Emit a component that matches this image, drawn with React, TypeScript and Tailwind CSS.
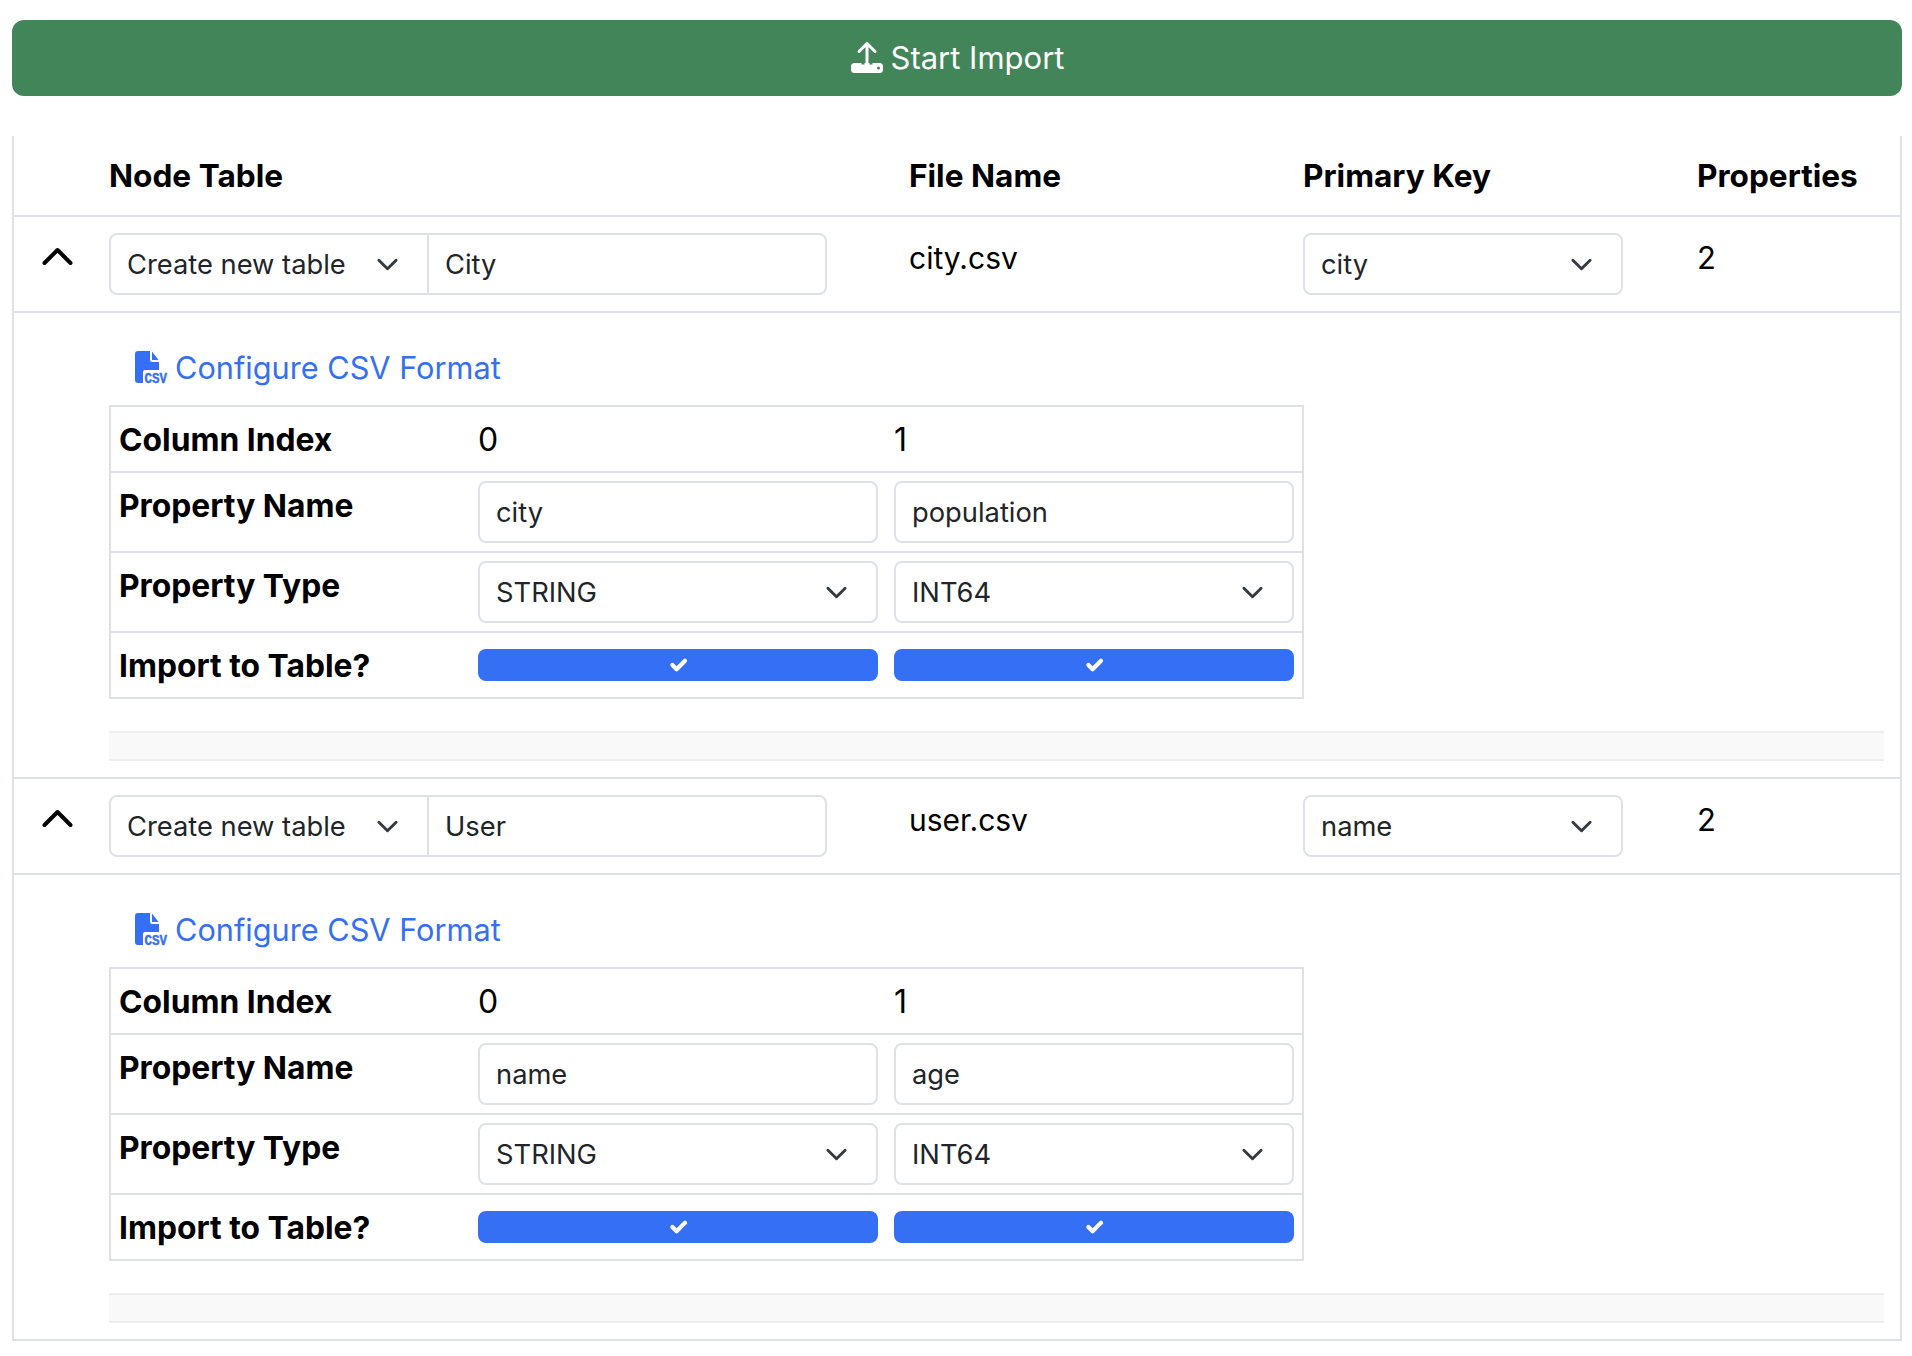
import React from 'react';

const Chevron = () => (
  <svg width="23" height="23" viewBox="0 0 16 16" fill="none" className="shrink-0">
    <path d="m2 5 6 6 6-6" stroke="#343a40" strokeWidth="2" strokeLinecap="round" strokeLinejoin="round" />
  </svg>
);

const UploadIcon = () => (
  <svg width="34" height="34" viewBox="0 0 34 34" fill="none" className="shrink-0">
    <rect x="1" y="22" width="32" height="10" rx="3.5" fill="#fff" />
    <path d="M14 22h6v3h-6z" fill="#fff" />
    <rect x="27" y="25.5" width="3" height="3" rx="1.5" fill="#418558" />
    <path d="M14.5 21.5h-3v2h3zM22.5 21.5h-3v2h3z" fill="#418558" />
    <path d="M17 24V3M9 10.5 17 2.5l8 8" stroke="#fff" strokeWidth="3" strokeLinecap="round" strokeLinejoin="round" />
  </svg>
);

const CsvIcon = () => (
  <svg width="37" height="38" viewBox="0 0 37 38" className="shrink-0">
    <path d="M3 0h12v8.5a2.5 2.5 0 0 0 2.5 2.5H24v8H10a2 2 0 0 0-2 2v11H3a3 3 0 0 1-3-3V3a3 3 0 0 1 3-3z" fill="#356ff3" />
    <path d="M17 0.5 23.5 9H17z" fill="#356ff3" />
    <text x="9.5" y="32" fontFamily="'Liberation Mono', monospace" fontWeight="700" fontSize="14" stroke="#356ff3" strokeWidth="0.4" fill="#356ff3" textLength="22.5" lengthAdjust="spacingAndGlyphs">CSV</text>
  </svg>
);

const SelectBox = ({ value, className }: { value: string; className?: string }) => (
  <div className={`h-[62px] flex items-center justify-between pl-[16px] pr-[28px] text-[27.3px] text-[#212529] border-2 border-[#dee2e6] bg-white ${className ?? 'rounded-lg'}`}>
    <span className="pt-[2px]">{value}</span>
    <Chevron />
  </div>
);

const InputBox = ({ value, className }: { value: string; className?: string }) => (
  <div className={`h-[62px] flex items-center pl-[16px] pt-[2px] text-[27.3px] text-[#212529] border-2 border-[#dee2e6] bg-white ${className ?? 'rounded-lg'}`}>
    {value}
  </div>
);

const ImportToggle = () => (
  <div className="h-8 rounded-lg bg-[#356ff3] flex items-center justify-center">
    <svg width="28" height="28" viewBox="0 0 20 20" fill="none">
      <path d="M6 10l3 3 6-6" stroke="#fff" strokeWidth="3" strokeLinecap="round" strokeLinejoin="round" />
    </svg>
  </div>
);

const rowGrid = 'grid grid-cols-[367px_416px_1fr] border-b-2 border-[#dee2e6]';
const labelCell = 'pl-2 text-[31.8px] leading-[42px] font-bold text-black';

type Table = {
  name: string;
  file: string;
  primaryKey: string;
  columns: { name: string; type: string }[];
};

const tables: Table[] = [
  { name: 'City', file: 'city.csv', primaryKey: 'city', columns: [{ name: 'city', type: 'STRING' }, { name: 'population', type: 'INT64' }] },
  { name: 'User', file: 'user.csv', primaryKey: 'name', columns: [{ name: 'name', type: 'STRING' }, { name: 'age', type: 'INT64' }] },
];

const outerGrid = 'grid grid-cols-[95px_800px_394px_394px_1fr]';

const TableSection = ({ table }: { table: Table }) => (
  <div>
    <div className={`${outerGrid} h-[96px] border-b-2 border-[#dee2e6] pt-4`}>
      <div className="flex pl-[28px] pt-[13px]">
        <svg width="32" height="20" viewBox="0 0 32 20" fill="none">
          <path d="M2.5 17 15.5 4l13 13" stroke="#000" strokeWidth="4" strokeLinecap="round" strokeLinejoin="round" />
        </svg>
      </div>
      <div className="flex w-[718px]">
        <SelectBox value="Create new table" className="w-[320px] rounded-l-lg" />
        <InputBox value={table.name} className="flex-1 -ml-[2px] rounded-r-lg" />
      </div>
      <div className="text-[30px] leading-[50px] text-black">{table.file}</div>
      <div className="w-[320px]">
        <SelectBox value={table.primaryKey} />
      </div>
      <div className="text-[31px] leading-[50px] text-black">2</div>
    </div>
    <div className="pl-[95px] pr-4 h-[466px] border-b-2 border-[#dee2e6]">
      <div className="h-[92px] pl-[26px] pt-[38px] flex items-start gap-[3px]">
        <CsvIcon />
        <span className="text-[30.7px] leading-[34px] text-[#356ff3]">Configure CSV Format</span>
      </div>
      <div className="w-[1195px] border-2 border-b-0 border-[#dee2e6]">
        <div className={`${rowGrid} h-[66px]`}>
          <div className={`${labelCell} pt-[12px]`}>Column Index</div>
          {table.columns.map((_, i) => (
            <div key={i} className="pt-[12px] text-[32px] leading-[42px] text-black">{i}</div>
          ))}
        </div>
        <div className={`${rowGrid} h-[80px] pt-[8px]`}>
          <div className={`${labelCell} pt-[4px]`}>Property Name</div>
          {table.columns.map((c) => (
            <div key={c.name} className="w-[400px]"><InputBox value={c.name} /></div>
          ))}
        </div>
        <div className={`${rowGrid} h-[80px] pt-[8px]`}>
          <div className={`${labelCell} pt-[4px]`}>Property Type</div>
          {table.columns.map((c) => (
            <div key={c.name} className="w-[400px]"><SelectBox value={c.type} /></div>
          ))}
        </div>
        <div className={`${rowGrid} h-[66px]`}>
          <div className={`${labelCell} pt-[12px]`}>Import to Table?</div>
          {table.columns.map((c) => (
            <div key={c.name} className="w-[400px] pt-[16px]"><ImportToggle /></div>
          ))}
        </div>
      </div>
      <div className="mt-[32px] h-[30px] border-y-2 border-[#eeeeee] bg-[#f9f9f9]" />
    </div>
  </div>
);

export default function App() {
  return (
    <div className="w-[1912px] min-h-[1356px] bg-white pl-3 pr-[10px] pt-5 font-['Inter',sans-serif]">
      <button className="w-full h-[76px] rounded-xl bg-[#418558] text-white text-[31px] flex items-center justify-center gap-[7px]">
        <UploadIcon />
        <span className="pt-[1px]">Start Import</span>
      </button>
      <div className="mt-10 border-x-2 border-[#dee2e6]">
        <div className={`${outerGrid} h-[81px] border-b-2 border-[#dee2e6] items-start pt-[19px] text-[31.6px] leading-[42px] font-bold text-black`}>
          <div />
          <div>Node Table</div>
          <div>File Name</div>
          <div>Primary Key</div>
          <div>Properties</div>
        </div>
        {tables.map((t) => (
          <TableSection key={t.file} table={t} />
        ))}
      </div>
    </div>
  );
}
